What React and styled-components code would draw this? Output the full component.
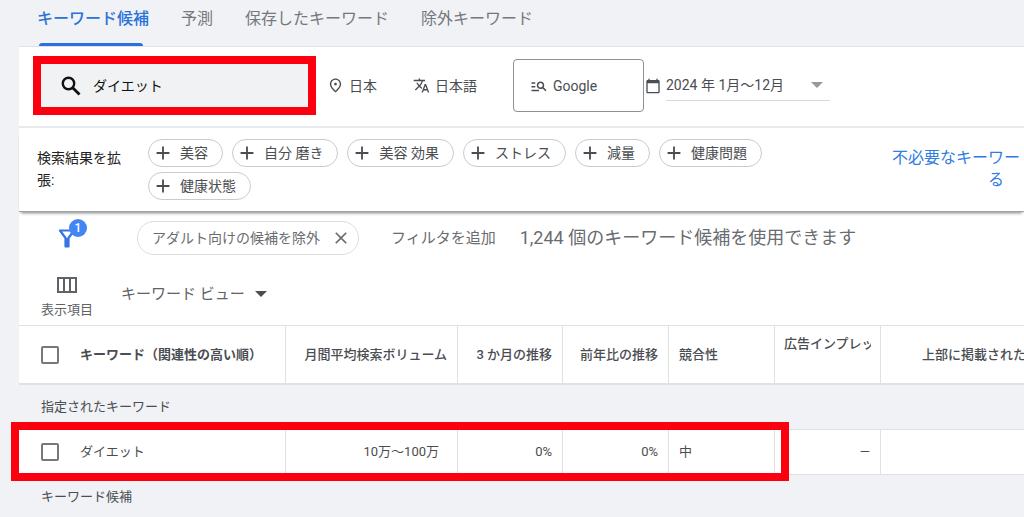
import { useState } from "react";
import styled, { createGlobalStyle } from "styled-components";

import {
  MdAdd,
  MdCalendarToday,
  MdClose,
  MdManageSearch,
  MdOutlinePlace,
  MdTranslate,
} from "react-icons/md";

const tabs = ["キーワード候補", "予測", "保存したキーワード", "除外キーワード"];

const suggestions = [
  "美容",
  "自分 磨き",
  "美容 効果",
  "ストレス",
  "減量",
  "健康問題",
  "健康状態",
];

const columnWidths = [267, 172, 105, 106, 106, 106];

export default function App() {
  const [query, setQuery] = useState("ダイエット");

  return (
    <Page>
      <GlobalStyle />
      <Tabs>
        {tabs.map((tab, i) => (
          <Tab key={tab} href="#" $active={i === 0}>
            {tab}
          </Tab>
        ))}
      </Tabs>

      <Panel>
        <SearchBar>
          <SearchBox>
            <SearchIcon />
            <input
              aria-label="キーワード"
              value={query}
              onChange={(e) => setQuery(e.target.value)}
            />
          </SearchBox>
          <Setting $width={86}>
            <MdOutlinePlace size={17} />
            日本
          </Setting>
          <Setting $width={100}>
            <MdTranslate size={17} />
            日本語
          </Setting>
          <NetworkButton>
            <MdManageSearch size={18} />
            Google
          </NetworkButton>
          <DateRange>
            <MdCalendarToday size={16} />
            <DateField>
              <select aria-label="期間">
                <option>2024 年 1月〜12月</option>
              </select>
              <Caret $light />
            </DateField>
          </DateRange>
        </SearchBar>

        <ExpandBar>
          <ExpandLabel>検索結果を拡張:</ExpandLabel>
          <Chips>
            {suggestions.map((s) => (
              <Chip key={s}>
                <MdAdd size={22} />
                {s}
              </Chip>
            ))}
          </Chips>
          <ExcludeLink href="#">不必要なキーワードを除外する</ExcludeLink>
        </ExpandBar>

        <FilterBar>
          <FilterButton aria-label="フィルタ">
            <FunnelIcon />
            <Badge>1</Badge>
          </FilterButton>
          <FilterChip>
            アダルト向けの候補を除外
            <button aria-label="削除">
              <MdClose size={20} />
            </button>
          </FilterChip>
          <AddFilter>フィルタを追加</AddFilter>
          <Count>1,244 個のキーワード候補を使用できます</Count>
        </FilterBar>

        <ViewBar>
          <ColumnsButton>
            <ColumnsIcon />
            表示項目
          </ColumnsButton>
          <ViewField>
            <select aria-label="表示">
              <option>キーワード ビュー</option>
            </select>
            <Caret />
          </ViewField>
        </ViewBar>

        <Table>
          <colgroup>
            {columnWidths.map((w, i) => (
              <Col key={i} $width={w} />
            ))}
            <col />
          </colgroup>
          <thead>
            <tr>
              <HeadCell $strong>
                <KeywordCell>
                  <input type="checkbox" aria-label="すべて選択" />
                  キーワード（関連性の高い順）
                </KeywordCell>
              </HeadCell>
              <HeadCell $align="right">月間平均検索ボリューム</HeadCell>
              <HeadCell $align="right">3 か月の推移</HeadCell>
              <HeadCell $align="right">前年比の推移</HeadCell>
              <HeadCell>競合性</HeadCell>
              <HeadCell $top>
                <Clip>広告インプレッション シェア</Clip>
              </HeadCell>
              <HeadCell $indent>上部に掲載された</HeadCell>
            </tr>
          </thead>
          <tbody>
            <tr>
              <GroupCell colSpan={7}>指定されたキーワード</GroupCell>
            </tr>
            <KeywordRow>
              <Cell>
                <KeywordCell>
                  <input type="checkbox" aria-label="ダイエットを選択" />
                  ダイエット
                </KeywordCell>
                <Highlight />
              </Cell>
              <Cell $align="right" $wide>
                10万〜100万
              </Cell>
              <Cell $align="right">0%</Cell>
              <Cell $align="right">0%</Cell>
              <Cell>中</Cell>
              <Cell $align="right">—</Cell>
              <Cell />
            </KeywordRow>
            <tr>
              <GroupCell colSpan={7}>キーワード候補</GroupCell>
            </tr>
          </tbody>
        </Table>
      </Panel>
    </Page>
  );
}

const SearchIcon = () => (
  <svg width="20" height="20" viewBox="0 0 20 20" fill="none">
    <circle cx="7.5" cy="7.5" r="5.7" stroke="currentColor" strokeWidth="2.4" />
    <path d="M11.7 11.7l6.8 6.8" stroke="currentColor" strokeWidth="2.8" />
  </svg>
);

const FunnelIcon = () => (
  <svg width="18" height="19" viewBox="0 0 18 19" fill="none">
    <path
      d="M2 1.5h14L10.5 9v8.5h-3V9z"
      stroke="currentColor"
      strokeWidth="2.2"
      strokeLinejoin="round"
    />
    <path d="M7 9h4v9H7z" fill="currentColor" />
  </svg>
);

const ColumnsIcon = () => (
  <svg width="20" height="16" viewBox="0 0 20 16" fill="none">
    <path
      d="M1 1h18v14H1zM7 1v14M13 1v14"
      stroke="currentColor"
      strokeWidth="2"
    />
  </svg>
);

const GlobalStyle = createGlobalStyle`
  * {
    box-sizing: border-box;
  }

  body {
    margin: 0;
    background: #f0f2f5;
    color: #4a4d51;
    font-family: Roboto, "Noto Sans CJK JP", sans-serif;
    font-size: 14px;
    line-height: 22px;
  }

  button,
  input,
  select {
    padding: 0;
    border: 0;
    background: none;
    color: inherit;
    font: inherit;
  }

  select {
    appearance: none;
  }

  a {
    text-decoration: none;
  }

  svg {
    flex: none;
  }
`;

const Page = styled.div`
  min-height: 100vh;
  padding-left: 19px;
  overflow: hidden;
`;

const Tabs = styled.nav`
  display: flex;
  gap: 32px;
  height: 47px;
  padding-left: 18px;
  border-bottom: 1px solid #e0e2e5;
`;

const Tab = styled.a`
  position: relative;
  padding-top: 8px;
  color: ${({ $active }) => ($active ? "#2b71d9" : "#74777b")};
  font-size: 16px;
  font-weight: ${({ $active }) => ($active ? 500 : 400)};
  white-space: nowrap;

  &::after {
    content: "";
    display: ${({ $active }) => ($active ? "block" : "none")};
    position: absolute;
    right: 6px;
    bottom: 0;
    left: 2px;
    height: 3px;
    border-radius: 3px 3px 0 0;
    background: #2b71d9;
  }
`;

const Panel = styled.main`
  background: #fff;
`;

const SearchBar = styled.div`
  display: flex;
  align-items: center;
  height: 81px;
  padding: 0 14px 2px;
  border-bottom: 2px solid #e8e9ea;
`;

const SearchBox = styled.label`
  display: flex;
  align-items: center;
  flex: none;
  gap: 12px;
  width: 283px;
  height: 59px;
  margin-right: 11px;
  padding-left: 20px;
  border: 8px solid #fc0010;
  background: #f0f2f4;
  color: #111;

  input {
    width: 180px;
    outline: 0;
  }
`;

const Setting = styled.button`
  display: flex;
  align-items: center;
  flex: none;
  gap: 5px;
  width: ${({ $width }) => $width}px;
`;

const NetworkButton = styled.button`
  display: flex;
  align-items: center;
  flex: none;
  gap: 5px;
  width: 131px;
  height: 53px;
  padding-left: 16px;
  border: 1px solid #8d9094;
  border-radius: 4px;
`;

const DateRange = styled.div`
  display: flex;
  align-items: center;
  gap: 5px;
  padding-left: 1px;
`;

const DateField = styled.div`
  display: flex;
  align-items: center;
  width: 164px;
  height: 30px;
  padding-right: 7px;
  border-bottom: 1px solid #d6d8da;

  select {
    flex: 1;
  }
`;

const Caret = styled.span`
  border: solid transparent;
  border-width: 6px 6px 0;
  border-top-color: ${({ $light }) => ($light ? "#97999c" : "#4a4d51")};
  pointer-events: none;
`;

const ExpandBar = styled.div`
  position: relative;
  display: flex;
  padding: 11px 0 11px 18px;
  border-bottom: 1px solid #9fa1a3;
  box-shadow: 0 3px 3px -2px rgba(0, 0, 0, 0.5);
`;

const ExpandLabel = styled.span`
  flex: none;
  width: 86px;
  margin: 8px 25px 0 0;
  color: #222;
`;

const Chips = styled.div`
  display: flex;
  flex: none;
  flex-wrap: wrap;
  gap: 5px 9px;
  width: 700px;
`;

const Chip = styled.button`
  display: flex;
  align-items: center;
  gap: 6px;
  height: 28px;
  padding: 0 14px 0 3px;
  border: 1px solid #c9cbce;
  border-radius: 14px;
`;

const ExcludeLink = styled.a`
  flex: none;
  width: 208px;
  margin: 8px 0 0 44px;
  color: #2f7de1;
  font-size: 16px;
  text-align: center;
`;

const FilterBar = styled.div`
  display: flex;
  align-items: center;
  height: 52px;
  color: #696c70;
  white-space: nowrap;
`;

const FilterButton = styled.button`
  position: relative;
  display: flex;
  margin: 0 61px 0 39px;
  color: #3574e2;
`;

const Badge = styled.span`
  position: absolute;
  top: -10px;
  left: 11px;
  width: 18px;
  border-radius: 9px;
  background: #4285f4;
  color: #fff;
  font-size: 12px;
  font-weight: 500;
  line-height: 18px;
  text-align: center;
`;

const FilterChip = styled.span`
  display: flex;
  align-items: center;
  gap: 11px;
  height: 34px;
  padding: 0 7px 0 14px;
  border: 1px solid #dcdee0;
  border-radius: 18px;

  button {
    display: flex;
  }
`;

const AddFilter = styled.button`
  margin: 0 24px 0 32px;
  font-size: 15px;
`;

const Count = styled.span`
  font-size: 18px;
`;

const ViewBar = styled.div`
  display: flex;
  height: 61px;
  padding-left: 22px;
  color: #5f6266;
`;

const ColumnsButton = styled.button`
  display: flex;
  flex-direction: column;
  align-items: center;
  gap: 7px;
  padding-top: 13px;
  font-size: 13px;
  line-height: 20px;
`;

const ViewField = styled.div`
  display: flex;
  align-items: center;
  gap: 10px;
  height: 60px;
  padding-left: 28px;
  font-size: 15px;
`;

const Table = styled.table`
  width: 100%;
  border-spacing: 0;
  table-layout: fixed;
  font-size: 13px;
  line-height: 20px;

  input {
    flex: none;
    appearance: none;
    width: 18px;
    height: 18px;
    margin: 0;
    border: 2px solid #76797c;
    border-radius: 2px;
  }
`;

const Col = styled.col`
  width: ${({ $width }) => $width}px;
`;

const HeadCell = styled.th`
  height: 60px;
  padding: ${({ $top, $indent }) =>
    $top ? "8px 9px" : $indent ? "0 0 0 41px" : "0 10px"};
  border: solid #dfe1e3;
  border-width: 1px 1px 2px 0;
  font-weight: ${({ $strong }) => ($strong ? 700 : 500)};
  text-align: ${({ $align }) => $align || "left"};
  vertical-align: ${({ $top }) => ($top ? "top" : "middle")};
  white-space: nowrap;
  overflow: hidden;

  &:last-child {
    border-right: 0;
  }
`;

const Clip = styled.div`
  overflow: hidden;
`;

const KeywordCell = styled.label`
  display: flex;
  align-items: center;
  gap: 21px;
  padding-left: 12px;
`;

const GroupCell = styled.td`
  height: 44px;
  padding: 0 22px;
  background: #f0f2f5;
`;

const KeywordRow = styled.tr`
  position: relative;
`;

const Cell = styled.td`
  height: 46px;
  padding: 0 ${({ $wide }) => ($wide ? 18 : 10)}px 0 10px;
  border: solid #dfe1e3;
  border-width: 1px 1px 1px 0;
  text-align: ${({ $align }) => $align || "left"};

  &:last-child {
    border-right: 0;
  }
`;

/* red frame drawn around the row, over its borders */
const Highlight = styled.span`
  position: absolute;
  top: -7px;
  left: -8px;
  width: 778px;
  height: 59px;
  border: 8px solid #fc0010;
  pointer-events: none;
`;
